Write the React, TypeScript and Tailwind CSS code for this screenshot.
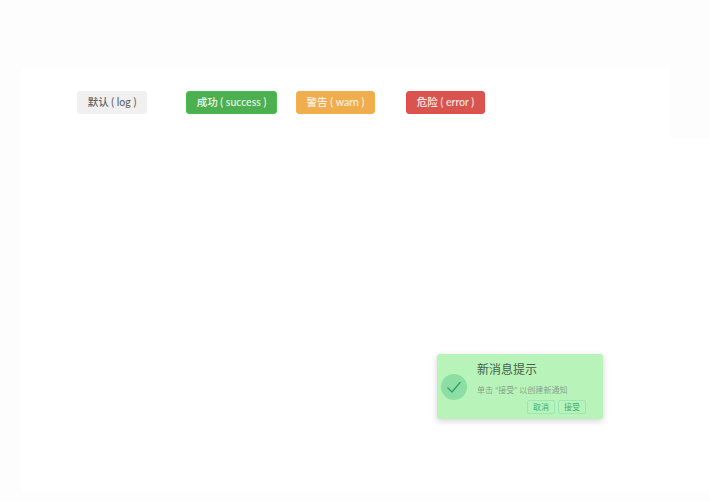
import React from "react";

const FONT = "font-['Lato','Noto_Sans_CJK_SC',sans-serif]";

const buttons = [
  { label: "默认 ( log )", cls: "w-[70px] mr-[39px] bg-[#f0f0f0] border-[#f0f0f0] text-[#666666]" },
  { label: "成功 ( success )", cls: "w-[91px] mr-[19px] bg-[#4cb050] border-[#45c04c] text-[#eaf6ea]" },
  { label: "警告 ( warn )", cls: "w-[79px] mr-[31px] bg-[#f0ad4e] border-[#f5b04a] text-[#fdf3e4]" },
  { label: "危险 ( error )", cls: "w-[79px] bg-[#d9534f] border-[#e8474a] text-[#fbe9e8]" },
];

function Notice() {
  return (
    <div className="absolute left-[437px] top-[354px] w-[166px] h-[65px] rounded-[3px] bg-[#b8f4b9] shadow-[0_2px_6px_rgba(0,0,0,0.18)] flex">
      <div className="ml-1 mt-[20px] w-[26px] h-[26px] rounded-full bg-[#8cdea3] flex items-center justify-center shrink-0">
        <svg width="16" height="14" viewBox="0 0 16 14" fill="none">
          <path d="M1.5 7.5 L6 12 L14.5 2" stroke="#27a06a" strokeWidth="1.2" />
        </svg>
      </div>
      <div className="ml-[10px] flex-1 pr-[17px] flex flex-col">
        <div className="mt-[8px] text-[12px] leading-[16px] text-[#46604b]">新消息提示</div>
        <div className="mt-[6px] text-[8px] leading-[12px] text-[#86a38b] whitespace-nowrap tracking-[0.05px]">单击 “接受” 以创建新通知</div>
        <div className="mt-[4px] flex justify-end gap-[3px]">
          <button className="w-[28px] h-[14px] rounded-[2px] border border-[#9be6b4] text-[8px] leading-[12px] text-[#3fae72]">取消</button>
          <button className="w-[28px] h-[14px] rounded-[2px] border border-[#9be6b4] text-[8px] leading-[12px] text-[#3fae72]">接受</button>
        </div>
      </div>
    </div>
  );
}

export default function App() {
  return (
    <div className={`relative w-[710px] h-[501px] overflow-hidden bg-[#fdfdfd] pt-[68px] ${FONT}`}>
      <div className="relative ml-[22px] h-[424px] bg-white pt-[23px] pl-[55px]">
        <div className="absolute right-0 top-0 w-[40px] h-[70px] bg-[#fdfdfd]" />
        <div className="flex">
          {buttons.map((b) => (
            <button
              key={b.label}
              className={`h-[23px] rounded-[3px] border text-[10.5px] font-medium whitespace-nowrap flex items-center justify-center ${b.cls}`}
            >
              {b.label}
            </button>
          ))}
        </div>
      </div>
      <Notice />
    </div>
  );
}
